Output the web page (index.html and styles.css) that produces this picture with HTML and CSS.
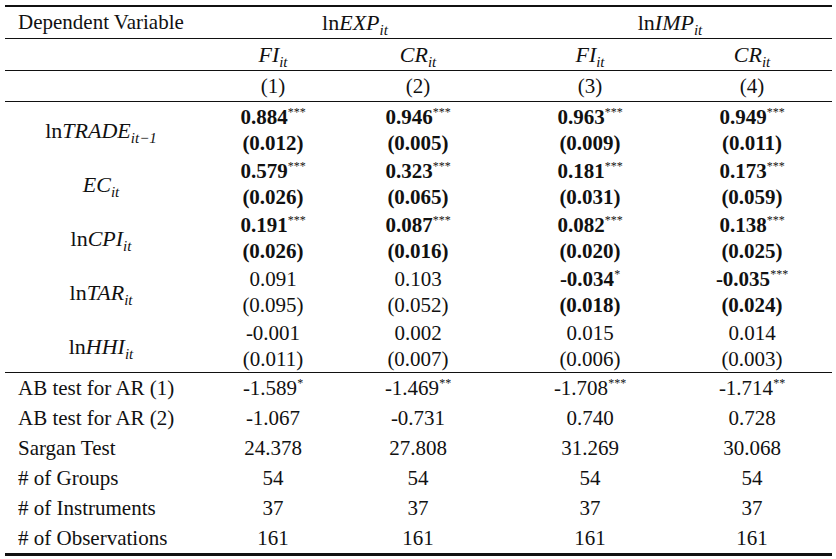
FILE: index.html
```html
<!DOCTYPE html>
<html>
<head>
<meta charset="utf-8">
<title>Regression table</title>
<link rel="stylesheet" href="styles.css">
</head>
<body>
<div class="table">
  <div class="row head1">
    <div class="lbl left">Dependent Variable</div>
    <div class="c"><span class="m">ln<i>EXP</i><sub>it</sub></span></div>
    <div class="c"><span class="m">ln<i>IMP</i><sub>it</sub></span></div>
  </div>
  <div class="row head2 cols">
    <div></div>
    <div class="c"><span class="m"><i>FI</i><sub>it</sub></span></div>
    <div class="c"><span class="m"><i>CR</i><sub>it</sub></span></div>
    <div class="c"><span class="m"><i>FI</i><sub>it</sub></span></div>
    <div class="c"><span class="m"><i>CR</i><sub>it</sub></span></div>
  </div>
  <div class="row head3 cols">
    <div></div>
    <div class="c">(1)</div>
    <div class="c">(2)</div>
    <div class="c">(3)</div>
    <div class="c">(4)</div>
  </div>

  <div class="data">
    <div class="block cols">
      <div class="lbl"><span class="m">ln<i>TRADE</i><sub><i>it</i>−1</sub></span></div>
      <div class="cell b"><div>0.884<sup>***</sup></div><div>(0.012)</div></div>
      <div class="cell b"><div>0.946<sup>***</sup></div><div>(0.005)</div></div>
      <div class="cell b"><div>0.963<sup>***</sup></div><div>(0.009)</div></div>
      <div class="cell b"><div>0.949<sup>***</sup></div><div>(0.011)</div></div>
    </div>
    <div class="block cols">
      <div class="lbl"><span class="m"><i>EC</i><sub>it</sub></span></div>
      <div class="cell b"><div>0.579<sup>***</sup></div><div>(0.026)</div></div>
      <div class="cell b"><div>0.323<sup>***</sup></div><div>(0.065)</div></div>
      <div class="cell b"><div>0.181<sup>***</sup></div><div>(0.031)</div></div>
      <div class="cell b"><div>0.173<sup>***</sup></div><div>(0.059)</div></div>
    </div>
    <div class="block cols">
      <div class="lbl"><span class="m">ln<i>CPI</i><sub>it</sub></span></div>
      <div class="cell b"><div>0.191<sup>***</sup></div><div>(0.026)</div></div>
      <div class="cell b"><div>0.087<sup>***</sup></div><div>(0.016)</div></div>
      <div class="cell b"><div>0.082<sup>***</sup></div><div>(0.020)</div></div>
      <div class="cell b"><div>0.138<sup>***</sup></div><div>(0.025)</div></div>
    </div>
    <div class="block cols">
      <div class="lbl"><span class="m">ln<i>TAR</i><sub>it</sub></span></div>
      <div class="cell"><div>0.091</div><div>(0.095)</div></div>
      <div class="cell"><div>0.103</div><div>(0.052)</div></div>
      <div class="cell b"><div>-0.034<sup>*</sup></div><div>(0.018)</div></div>
      <div class="cell b"><div>-0.035<sup>***</sup></div><div>(0.024)</div></div>
    </div>
    <div class="block cols last">
      <div class="lbl"><span class="m">ln<i>HHI</i><sub>it</sub></span></div>
      <div class="cell"><div>-0.001</div><div>(0.011)</div></div>
      <div class="cell"><div>0.002</div><div>(0.007)</div></div>
      <div class="cell"><div>0.015</div><div>(0.006)</div></div>
      <div class="cell"><div>0.014</div><div>(0.003)</div></div>
    </div>
  </div>

  <div class="stats">
    <div class="srow cols">
      <div class="lbl left">AB test for AR (1)</div>
      <div class="c">-1.589<sup>*</sup></div>
      <div class="c">-1.469<sup>**</sup></div>
      <div class="c">-1.708<sup>***</sup></div>
      <div class="c">-1.714<sup>**</sup></div>
    </div>
    <div class="srow cols">
      <div class="lbl left">AB test for AR (2)</div>
      <div class="c">-1.067</div>
      <div class="c">-0.731</div>
      <div class="c">0.740</div>
      <div class="c">0.728</div>
    </div>
    <div class="srow cols">
      <div class="lbl left">Sargan Test</div>
      <div class="c">24.378</div>
      <div class="c">27.808</div>
      <div class="c">31.269</div>
      <div class="c">30.068</div>
    </div>
    <div class="srow cols">
      <div class="lbl left"># of Groups</div>
      <div class="c">54</div>
      <div class="c">54</div>
      <div class="c">54</div>
      <div class="c">54</div>
    </div>
    <div class="srow cols">
      <div class="lbl left"># of Instruments</div>
      <div class="c">37</div>
      <div class="c">37</div>
      <div class="c">37</div>
      <div class="c">37</div>
    </div>
    <div class="srow cols">
      <div class="lbl left"># of Observations</div>
      <div class="c">161</div>
      <div class="c">161</div>
      <div class="c">161</div>
      <div class="c">161</div>
    </div>
  </div>
</div>
</body>
</html>
```

FILE: styles.css
```css
html, body {
  margin: 0;
  padding: 0;
  background: #ffffff;
}

body {
  padding-top: 5px;
  font-family: "Liberation Serif", "Times New Roman", serif;
  font-size: 21px;
  color: #111111;
}

.table {
  margin-left: 5px;
  width: 827px;
  border-top: 2px solid #111111;
  border-bottom: 3px solid #111111;
}

.row {
  display: grid;
  align-items: center;
  border-bottom: 1px solid #111111;
}

.cols {
  display: grid;
  grid-template-columns: 192px 152px 138px 206px 118px;
}

.head1 {
  grid-template-columns: 192px 316px 314px;
  height: 31px;
}

.head2 {
  height: 31px;
}

.head3 {
  height: 30px;
}

.c {
  text-align: center;
  white-space: nowrap;
}

.lbl {
  text-align: center;
  white-space: nowrap;
}

.lbl.left {
  text-align: left;
  padding-left: 13px;
}

.m {
  font-size: 22px;
}

.m i {
  font-style: italic;
}

sub {
  font-size: 15px;
  font-style: italic;
  line-height: 0;
  vertical-align: -5px;
}

sup {
  font-size: 12px;
  line-height: 0;
  vertical-align: 8px;
  font-weight: normal;
}

.block {
  height: 54px;
  align-items: center;
}

.block.last {
  border-bottom: 1px solid #111111;
}

.block .lbl {
  padding-top: 4px;
}

.cell {
  text-align: center;
  line-height: 26px;
  padding-top: 1px;
  white-space: nowrap;
}

.cell.b {
  font-weight: bold;
}

.srow {
  height: 30px;
  align-items: center;
}
```
